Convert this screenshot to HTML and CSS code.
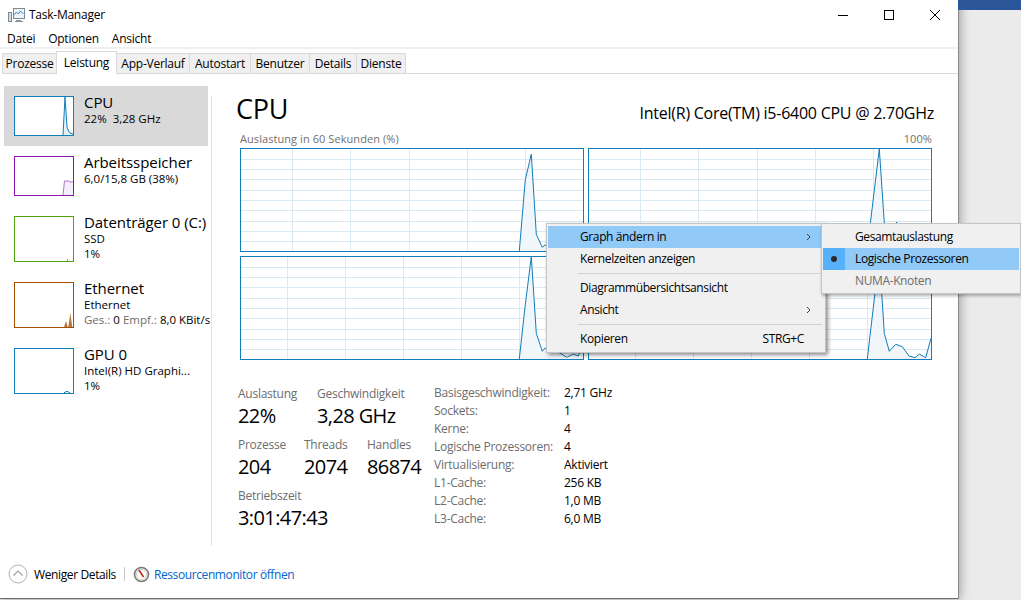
FILE: index.html
```html
<!DOCTYPE html>
<html lang="de">
<head>
<meta charset="utf-8">
<title>Task-Manager</title>
<link rel="stylesheet" href="styles.css">
</head>
<body>
<div class="desktop">
  <div class="window">
    <header class="titlebar">
      <svg class="app-icon" width="17" height="16" viewBox="0 0 17 16"><path class="ic-base" d="M8 13h5v1h2v1H7v-1h1z"/><rect class="ic-screen" x="5.5" y="1.5" width="11" height="10"/><path class="ic-line" d="M6 8l2.500-3 2 2 2-3 3 3"/><rect class="ic-tower" x="0.500" y="5.500" width="3" height="9"/></svg>
      <span class="title">Task-Manager</span>
      <div class="win-controls">
        <svg width="10" height="10" viewBox="0 0 10 10"><path class="ctl" d="M0 5.500h10"/></svg>
        <svg width="10" height="10" viewBox="0 0 10 10"><rect class="ctl" x="0.500" y="0.500" width="9" height="9"/></svg>
        <svg width="10" height="10" viewBox="0 0 10 10"><path class="ctl" d="M0 0l10 10M10 0L0 10"/></svg>
      </div>
    </header>
    <nav class="menubar"><span>Datei</span><span>Optionen</span><span>Ansicht</span></nav>
    <div class="tabs">
      <span class="tab">Prozesse</span>
      <span class="tab active">Leistung</span>
      <span class="tab">App-Verlauf</span>
      <span class="tab">Autostart</span>
      <span class="tab">Benutzer</span>
      <span class="tab">Details</span>
      <span class="tab">Dienste</span>
    </div>
    <div class="content">
      <aside class="sidebar">
        <div class="perf selected">
          <svg class="mini cpu" viewBox="0 0 58 38"><path class="fill" d="M48 38L50 0l2 30 1.500 4L55 36l3 1v1z"/><path class="line" d="M48 38L50 0l2 30 1.500 4L55 36l3 1"/></svg>
          <div class="perf-text"><div class="perf-name">CPU</div><div class="perf-sub">22%&nbsp; 3,28 GHz</div></div>
        </div>
        <div class="perf">
          <svg class="mini mem" viewBox="0 0 58 38"><path class="fill" d="M48 38l1.500-14H54l1 1h3v13z"/><path class="line" d="M48 38l1.500-14H54l1 1h3"/></svg>
          <div class="perf-text"><div class="perf-name">Arbeitsspeicher</div><div class="perf-sub">6,0/15,8 GB (38%)</div></div>
        </div>
        <div class="perf tall">
          <svg class="mini disk" viewBox="0 0 58 44"><path class="line" d="M52.500 44v-1.500"/></svg>
          <div class="perf-text"><div class="perf-name">Datenträger 0 (C:)</div><div class="perf-sub">SSD</div><div class="perf-sub">1%</div></div>
        </div>
        <div class="perf tall">
          <svg class="mini eth" viewBox="0 0 58 44"><path class="solid" d="M49 44l2-6 1.700 6h.6l2-14 2 14z"/></svg>
          <div class="perf-text"><div class="perf-name">Ethernet</div><div class="perf-sub">Ethernet</div><div class="perf-sub nowrap"><span class="muted">Ges.:</span> 0 <span class="muted">Empf.:</span> 8,0 KBit/s</div></div>
        </div>
        <div class="perf tall">
          <svg class="mini gpu" viewBox="0 0 58 44"><path class="line" d="M49 44l1-1h1l1-1 1 1h1l1 1"/></svg>
          <div class="perf-text"><div class="perf-name">GPU 0</div><div class="perf-sub">Intel(R) HD Graphi...</div><div class="perf-sub">1%</div></div>
        </div>
      </aside>
      <div class="divider"></div>
      <main class="main">
        <div class="heading"><h1>CPU</h1><span class="model">Intel(R) Core(TM) i5-6400 CPU @ 2.70GHz</span></div>
        <div class="chart-caption"><span>Auslastung in 60 Sekunden (%)</span><span>100%</span></div>
        <div class="charts">
          <svg class="chart" width="344" height="104" viewBox="0 0 344 104">
            <path class="grid" d="M52.500 0v104M110.500 0v104M169.500 0v104M227.500 0v104M285.500 0v104M0 11.500h344M0 21.500h344M0 31.500h344M0 42.500h344M0 52.500h344M0 62.500h344M0 73.500h344M0 83.500h344M0 93.500h344"/>
            <path class="area" d="M279.300 103L285.300 31.700 291.300 6.300 296.300 86.300 302.300 99.300 305 97 344 100V103z"/>
            <path class="trace" d="M279.300 103L285.300 31.700 291.300 6.300 296.300 86.300 302.300 99.300 305 97 344 100"/>
            <rect class="frame" x="0.500" y="0.500" width="343" height="103"/>
          </svg>
          <svg class="chart" width="344" height="104" viewBox="0 0 344 104">
            <path class="grid" d="M52.500 0v104M110.500 0v104M169.500 0v104M227.500 0v104M285.500 0v104M0 11.500h344M0 21.500h344M0 31.500h344M0 42.500h344M0 52.500h344M0 62.500h344M0 73.500h344M0 83.500h344M0 93.500h344"/>
            <path class="area" d="M279 103L291.300 1 296.300 75 300 100 304 95 308.700 74 313 95 344 90V103z"/>
            <path class="trace" d="M279 103L291.300 1 296.300 75 300 100 304 95 308.700 74 313 95 344 90"/>
            <rect class="frame" x="0.500" y="0.500" width="343" height="103"/>
          </svg>
          <svg class="chart" width="344" height="104" viewBox="0 0 344 104">
            <path class="grid" d="M47.500 0v104M105.500 0v104M163.500 0v104M221.500 0v104M279.500 0v104M0 11.500h344M0 21.500h344M0 31.500h344M0 42.500h344M0 52.500h344M0 62.500h344M0 73.500h344M0 83.500h344M0 93.500h344"/>
            <path class="area" d="M279.300 103L285 51 291.300 0.700 296.300 77.300 302.300 95.300 305 92 320 97 326.700 101.300 333.300 98 338.300 100 343 87V103z"/>
            <path class="trace" d="M279.300 103L285 51 291.300 0.700 296.300 77.300 302.300 95.300 305 92 320 97 326.700 101.300 333.300 98 338.300 100 343 87"/>
            <rect class="frame" x="0.500" y="0.500" width="343" height="103"/>
          </svg>
          <svg class="chart" width="344" height="104" viewBox="0 0 344 104">
            <path class="grid" d="M47.500 0v104M105.500 0v104M163.500 0v104M221.500 0v104M279.500 0v104M0 11.500h344M0 21.500h344M0 31.500h344M0 42.500h344M0 52.500h344M0 62.500h344M0 73.500h344M0 83.500h344M0 93.500h344"/>
            <path class="area" d="M279.300 103L287 37 291.300 0 296.300 77.300 301.300 95.300 307.700 88.300 314.300 90.700 321 100 327 101.700 331.300 98 337.700 101.700 343 82.300V103z"/>
            <path class="trace" d="M279.300 103L287 37 291.300 0 296.300 77.300 301.300 95.300 307.700 88.300 314.300 90.700 321 100 327 101.700 331.300 98 337.700 101.700 343 82.300"/>
            <rect class="frame" x="0.500" y="0.500" width="343" height="103"/>
          </svg>
        </div>
        <section class="stats">
          <div class="stats-left">
            <div class="stat-row">
              <div class="stat col-load"><div class="stat-label">Auslastung</div><div class="stat-value">22%</div></div>
              <div class="stat"><div class="stat-label">Geschwindigkeit</div><div class="stat-value">3,28 GHz</div></div>
            </div>
            <div class="stat-row">
              <div class="stat col-proc"><div class="stat-label">Prozesse</div><div class="stat-value">204</div></div>
              <div class="stat col-thr"><div class="stat-label">Threads</div><div class="stat-value">2074</div></div>
              <div class="stat"><div class="stat-label">Handles</div><div class="stat-value">86874</div></div>
            </div>
            <div class="stat-row">
              <div class="stat"><div class="stat-label">Betriebszeit</div><div class="stat-value">3:01:47:43</div></div>
            </div>
          </div>
          <dl class="specs">
            <dt>Basisgeschwindigkeit:</dt><dd>2,71 GHz</dd>
            <dt>Sockets:</dt><dd>1</dd>
            <dt>Kerne:</dt><dd>4</dd>
            <dt>Logische Prozessoren:</dt><dd>4</dd>
            <dt>Virtualisierung:</dt><dd>Aktiviert</dd>
            <dt>L1-Cache:</dt><dd>256 KB</dd>
            <dt>L2-Cache:</dt><dd>1,0 MB</dd>
            <dt>L3-Cache:</dt><dd>6,0 MB</dd>
          </dl>
        </section>
      </main>
    </div>
    <footer class="footer">
      <svg class="less-icon" width="20" height="20" viewBox="0 0 20 20"><circle class="less-ring" cx="10" cy="10" r="9"/><path class="less-chev" d="M5.500 11.500L10 7l4.500 4.500"/></svg>
      <span class="less">Weniger Details</span>
      <span class="foot-sep"></span>
      <svg class="gauge" width="17" height="17" viewBox="0 0 17 17"><circle class="gauge-ring" cx="8.500" cy="8.500" r="7"/><circle class="gauge-face" cx="8.500" cy="8.500" r="5"/><path class="gauge-needle" d="M6 4l4.500 7"/></svg>
      <a class="monitor-link">Ressourcenmonitor öffnen</a>
    </footer>

    <div class="ctx-menu">
      <div class="ctx-item hot"><span>Graph ändern in</span><svg class="chev" width="5" height="8" viewBox="0 0 5 8"><path d="M1 1l3 3-3 3"/></svg></div>
      <div class="ctx-item"><span>Kernelzeiten anzeigen</span></div>
      <div class="ctx-sep"></div>
      <div class="ctx-item"><span>Diagrammübersichtsansicht</span></div>
      <div class="ctx-item"><span>Ansicht</span><svg class="chev" width="5" height="8" viewBox="0 0 5 8"><path d="M1 1l3 3-3 3"/></svg></div>
      <div class="ctx-sep"></div>
      <div class="ctx-item"><span>Kopieren</span><span class="shortcut">STRG+C</span></div>
    </div>
    <div class="ctx-sub">
      <div class="sub-item"><span class="sub-check"></span><span>Gesamtauslastung</span></div>
      <div class="sub-item hot"><span class="sub-check on"><i class="dot"></i></span><span>Logische Prozessoren</span></div>
      <div class="sub-item disabled"><span class="sub-check"></span><span>NUMA-Knoten</span></div>
    </div>
  </div>
  <div class="backdrop"><div class="blue-bar"></div></div>
</div>
</body>
</html>
```

FILE: styles.css
```css
* { box-sizing: border-box; }
html, body { margin: 0; height: 100%; overflow: hidden; }
body {
  font-family: "Open Sans", "Noto Sans", "Liberation Sans", sans-serif;
  font-size: 12px;
  letter-spacing: -0.25px;
  color: #000;
  background: #ebebeb;
}
.desktop { display: flex; height: 600px; }

/* window */
.window {
  position: relative;
  z-index: 1;
  width: 958px;
  height: 599px;
  flex: none;
  display: flex;
  flex-direction: column;
  background: #fff;
  border-bottom: 1px solid #6b6b6b;
  box-shadow: 1px 0 0 #8a8a8a, 2px 0 10px rgba(0, 0, 0, 0.35);
}
.backdrop { flex: 1; }
.blue-bar { position: relative; z-index: 2; height: 10px; background: #2b579a; }

.titlebar { height: 29px; display: flex; align-items: center; padding-left: 8px; flex: none; }
.app-icon { margin-right: 4px; }
.ic-base { fill: #8d9498; }
.ic-screen { fill: #eef4fa; stroke: #7d8a94; }
.ic-line { fill: none; stroke: #2f8fd0; }
.ic-tower { fill: #d9dde0; stroke: #7d8a94; }
.title { line-height: 29px; }
.win-controls { margin-left: auto; display: flex; gap: 36px; padding-right: 18px; align-items: center; }
.win-controls svg { display: block; }
.ctl { fill: none; stroke: #000; stroke-width: 1; }

.menubar { height: 18px; display: flex; gap: 13px; padding: 1px 0 0 7px; line-height: 18px; flex: none; }
.menubar span { display: block; }

.tabs {
  flex: none;
  height: 27px;
  padding: 2px 0 0 2px;
  border-top: 2px solid #f0f0f0;
  display: grid;
  grid-template-columns: 55px 60px 73px 61px 59px 47px 49px 1fr;
  align-items: end;
}
.tabs::after {
  content: "";
  grid-column: 8;
  height: 1px;
  background: #d9d9d9;
}
.tab {
  height: 21px;
  line-height: 19px;
  text-align: center;
  background: #f0f0f0;
  border: 1px solid #d9d9d9;
  border-left-width: 0;
  white-space: nowrap;
}
.tab:first-child { border-left-width: 1px; }
.tab.active {
  height: 23px;
  line-height: 21px;
  background: #fff;
  border-left-width: 1px;
  border-bottom: 0;
  margin-left: -1px;
}

.content { flex: 1; display: flex; min-height: 0; }

/* sidebar */
.sidebar { width: 211px; flex: none; padding: 12px 0 0 4px; }
.perf { display: flex; width: 204px; height: 60px; padding: 10px 0 0 10px; gap: 10px; white-space: nowrap; }
.perf.tall { height: 66px; }
.perf.selected { background: #d9d9d9; }
.mini { display: block; flex: none; width: 60px; height: 40px; border: 1px solid; background: #fff; }
.tall .mini { height: 46px; }
.mini .line { fill: none; stroke-width: 1; }
.cpu { border-color: #117dbb; }
.cpu .line { stroke: #117dbb; }
.cpu .fill { fill: #e6f0f7; }
.mem { border-color: #8b12ae; }
.mem .line { stroke: #b66fcb; }
.mem .fill { fill: #f3f0f7; }
.disk { border-color: #4da60c; }
.disk .line { stroke: #4da60c; }
.eth { border-color: #a74f01; }
.eth .solid { fill: #b8753a; }
.gpu { border-color: #117dbb; }
.gpu .line { stroke: #117dbb; }
.perf-name { font-size: 15px; line-height: 20px; margin-top: -4px; letter-spacing: -0.06px; }
.perf-sub { font-size: 11.5px; line-height: 15px; letter-spacing: 0; }
.perf-name + .perf-sub { margin-top: -1px; }
.muted { color: #6d6d6d; }

.divider { width: 1px; flex: none; margin: 22px 0 1px; background: #e0e0e0; }

/* main */
.main { flex: 1; min-width: 0; padding: 0 24px 0 26px; }
.heading { height: 56px; display: flex; justify-content: space-between; align-items: baseline; padding: 16px 0 0 0; margin-left: -2px; }
.heading h1 { margin: 0; font-size: 27px; font-weight: 400; line-height: 38px; letter-spacing: -0.2px; }
.model { font-size: 16px; letter-spacing: -0.25px; }
.chart-caption {
  height: 18px;
  margin: 0 2px;
  display: flex;
  justify-content: space-between;
  font-size: 11px;
  line-height: 18px;
  color: #707070;
  letter-spacing: 0.07px;
}
.charts { display: grid; grid-template-columns: 344px 344px; gap: 4px; margin-left: 2px; }
.chart { display: block; }
.grid { fill: none; stroke: #d9eaf4; stroke-width: 1; }
.area { fill: #f1f6fa; }
.trace { fill: none; stroke: #117dbb; stroke-width: 1; }
.frame { fill: none; stroke: #117dbb; stroke-width: 1; }

/* stats */
.stats { display: flex; margin-top: 24px; }
.stats-left { width: 196px; flex: none; padding-top: 1px; }
.stat-row { display: flex; margin-bottom: 6px; white-space: nowrap; }
.col-load { width: 79px; }
.col-proc { width: 66px; }
.col-thr { width: 63px; }
.stat-label { line-height: 18px; color: #6d6d6d; }
.stat-value { font-size: 20px; line-height: 28px; margin-top: -1px; letter-spacing: -0.6px; }
.specs { margin: 0; display: grid; grid-template-columns: 130px auto; grid-auto-rows: 18px; line-height: 18px; }
.specs dt { color: #6d6d6d; white-space: nowrap; }
.specs dd { margin: 0; }

/* footer */
.footer { flex: none; height: 51px; display: flex; align-items: center; padding: 3px 0 0 8px; }
.less-icon { margin-right: 6px; }
.less-ring { fill: #fff; stroke: #b0b0b0; stroke-width: 1; }
.less-chev { fill: none; stroke: #a0a0a0; stroke-width: 1.2; }
.less { letter-spacing: -0.38px; }
.foot-sep { width: 1px; height: 14px; background: #c8c8c8; margin: 0 8px 0 8px; }
.gauge { margin-right: 4px; }
.gauge-ring { fill: #f4f1ec; stroke: #7a7a7a; stroke-width: 1.6; }
.gauge-face { fill: #fff; stroke: #b5b0a8; stroke-width: 0.6; }
.gauge-needle { fill: none; stroke: #c8251d; stroke-width: 1.6; }
.monitor-link { color: #0066cc; letter-spacing: -0.4px; }

/* context menus */
.ctx-menu, .ctx-sub {
  position: absolute;
  background: #f0f0f0;
  border: 1px solid #c4c4c4;
  padding: 2px 1px;
  letter-spacing: -0.38px;
}
.ctx-menu { left: 546px; top: 223px; width: 280px; height: 130px; box-shadow: 2px 2px 4px rgba(0, 0, 0, 0.45); }
.ctx-sub { left: 821px; top: 223px; width: 200px; height: 71px; z-index: 2; box-shadow: 1px 2px 3px rgba(0, 0, 0, 0.3); }
.ctx-item { height: 22px; display: flex; align-items: center; padding: 0 13px 0 32px; line-height: 22px; }
.ctx-item .chev { margin-left: auto; }
.chev path { fill: none; stroke: #444; stroke-width: 1; }
.ctx-item.hot { background: #91c9f7; }
.shortcut { margin-left: auto; margin-right: 7px; }
.ctx-sep { height: 7px; padding: 3px 0; margin-left: 30px; margin-right: 2px; background: linear-gradient(#d2d2d2, #d2d2d2) center / 100% 1px no-repeat; }
.sub-item { height: 22px; display: flex; align-items: center; line-height: 22px; }
.sub-check { width: 22px; height: 22px; margin-right: 10px; display: flex; align-items: center; justify-content: center; flex: none; }
.sub-check.on { background: #56b0fa; }
.dot { width: 6px; height: 6px; border-radius: 50%; background: #2a2a2a; display: block; }
.sub-item.hot { background: #91c9f7; }
.sub-item.disabled { color: #6d6d6d; }
.nowrap { white-space: nowrap; }
```
